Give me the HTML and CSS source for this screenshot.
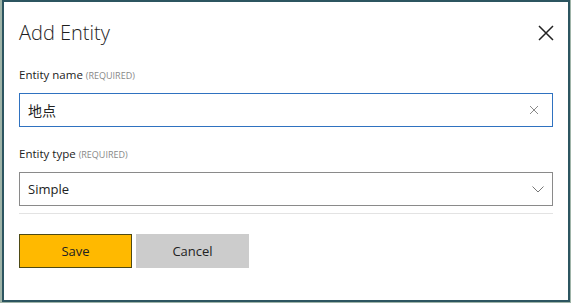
FILE: index.html
```html
<!DOCTYPE html>
<html lang="en">
<head>
  <meta charset="UTF-8" />
  <title>Add Entity</title>
  <link rel="stylesheet" href="styles.css">
</head>
<body>

  <div class="dialog">
    <div class="dialog-header">
      <h1 class="dialog-title">Add Entity</h1>
      <button class="close-btn" aria-label="Close">
        <svg width="16" height="16" viewBox="0 0 16 16">
          <path d="M1 1 L15 15 M15 1 L1 15" stroke="#222" stroke-width="1.5" fill="none"/>
        </svg>
      </button>
    </div>

    <div class="field">
      <label class="field-label">Entity name <span class="req">(REQUIRED)</span></label>
      <div class="input input-focus">
        <span class="input-text cjk">地点</span>
        <svg class="clear-icon" width="10" height="10" viewBox="0 0 10 10">
          <path d="M1 1 L9 9 M9 1 L1 9" stroke="#8a8a8a" stroke-width="1" fill="none"/>
        </svg>
      </div>
    </div>

    <div class="field field-last">
      <label class="field-label">Entity type <span class="req">(REQUIRED)</span></label>
      <div class="input">
        <span class="input-text">Simple</span>
        <svg class="chevron" width="12" height="7" viewBox="0 0 12 7">
          <path d="M0.5 0.5 L6 6 L11.5 0.5" stroke="#777" stroke-width="1" fill="none"/>
        </svg>
      </div>
    </div>

    <div class="separator"></div>

    <div class="actions">
      <button class="btn btn-primary">Save</button>
      <button class="btn btn-default">Cancel</button>
    </div>
  </div>

</body>
</html>
```

FILE: styles.css
```css
html, body {
  margin: 0;
  height: 100%;
}

body {
  font-family: "Segoe UI", "Open Sans", "Noto Sans", sans-serif;
  background-color: #9fb4a8;
  color: #222;
  padding: 0 1px 1px 2px;
  box-sizing: border-box;
}

.dialog {
  height: 302px;
  box-sizing: border-box;
  background: #fff;
  border: 2px solid #2c5560;
  padding: 0 15px 0 15px;
}

.dialog-header {
  display: flex;
  justify-content: space-between;
  align-items: center;
  padding-top: 17px;
  height: 28px;
  margin-bottom: 20px;
}

.dialog-title {
  margin: 0;
  font-size: 20px;
  font-weight: 300;
  line-height: 28px;
  color: #1e1e1e;
}

.close-btn {
  background: none;
  border: none;
  padding: 0;
  margin-right: -1px;
  display: flex;
  cursor: pointer;
}

.field {
  display: flex;
  flex-direction: column;
  margin-bottom: 19px;
}

.field-label {
  font-size: 11.5px;
  line-height: 16px;
  color: #222;
  margin-bottom: 9px;
}

.req {
  font-size: 9px;
  color: #888;
}

.input {
  height: 34px;
  box-sizing: border-box;
  border: 1px solid #8a8a8a;
  display: flex;
  align-items: center;
  justify-content: space-between;
  padding: 0 8px 0 8px;
}

.input-focus {
  border-color: #2f72c0;
  padding-right: 13px;
}

.input-text {
  font-size: 13px;
  color: #222;
}

.cjk {
  font-family: "Noto Sans CJK SC", sans-serif;
  font-size: 14px;
}

.field-last {
  margin-bottom: 7px;
}

.separator {
  height: 1px;
  background: #e3e3e3;
  margin-bottom: 20px;
}

.actions {
  display: flex;
  gap: 4px;
}

.btn {
  width: 113px;
  height: 34px;
  font-family: inherit;
  font-size: 13px;
  color: #222;
  border: none;
  cursor: pointer;
}

.btn-primary {
  background-color: #ffb900;
  border: 1px solid #4e4a14;
}

.btn-default {
  background-color: #cccccc;
}
```
